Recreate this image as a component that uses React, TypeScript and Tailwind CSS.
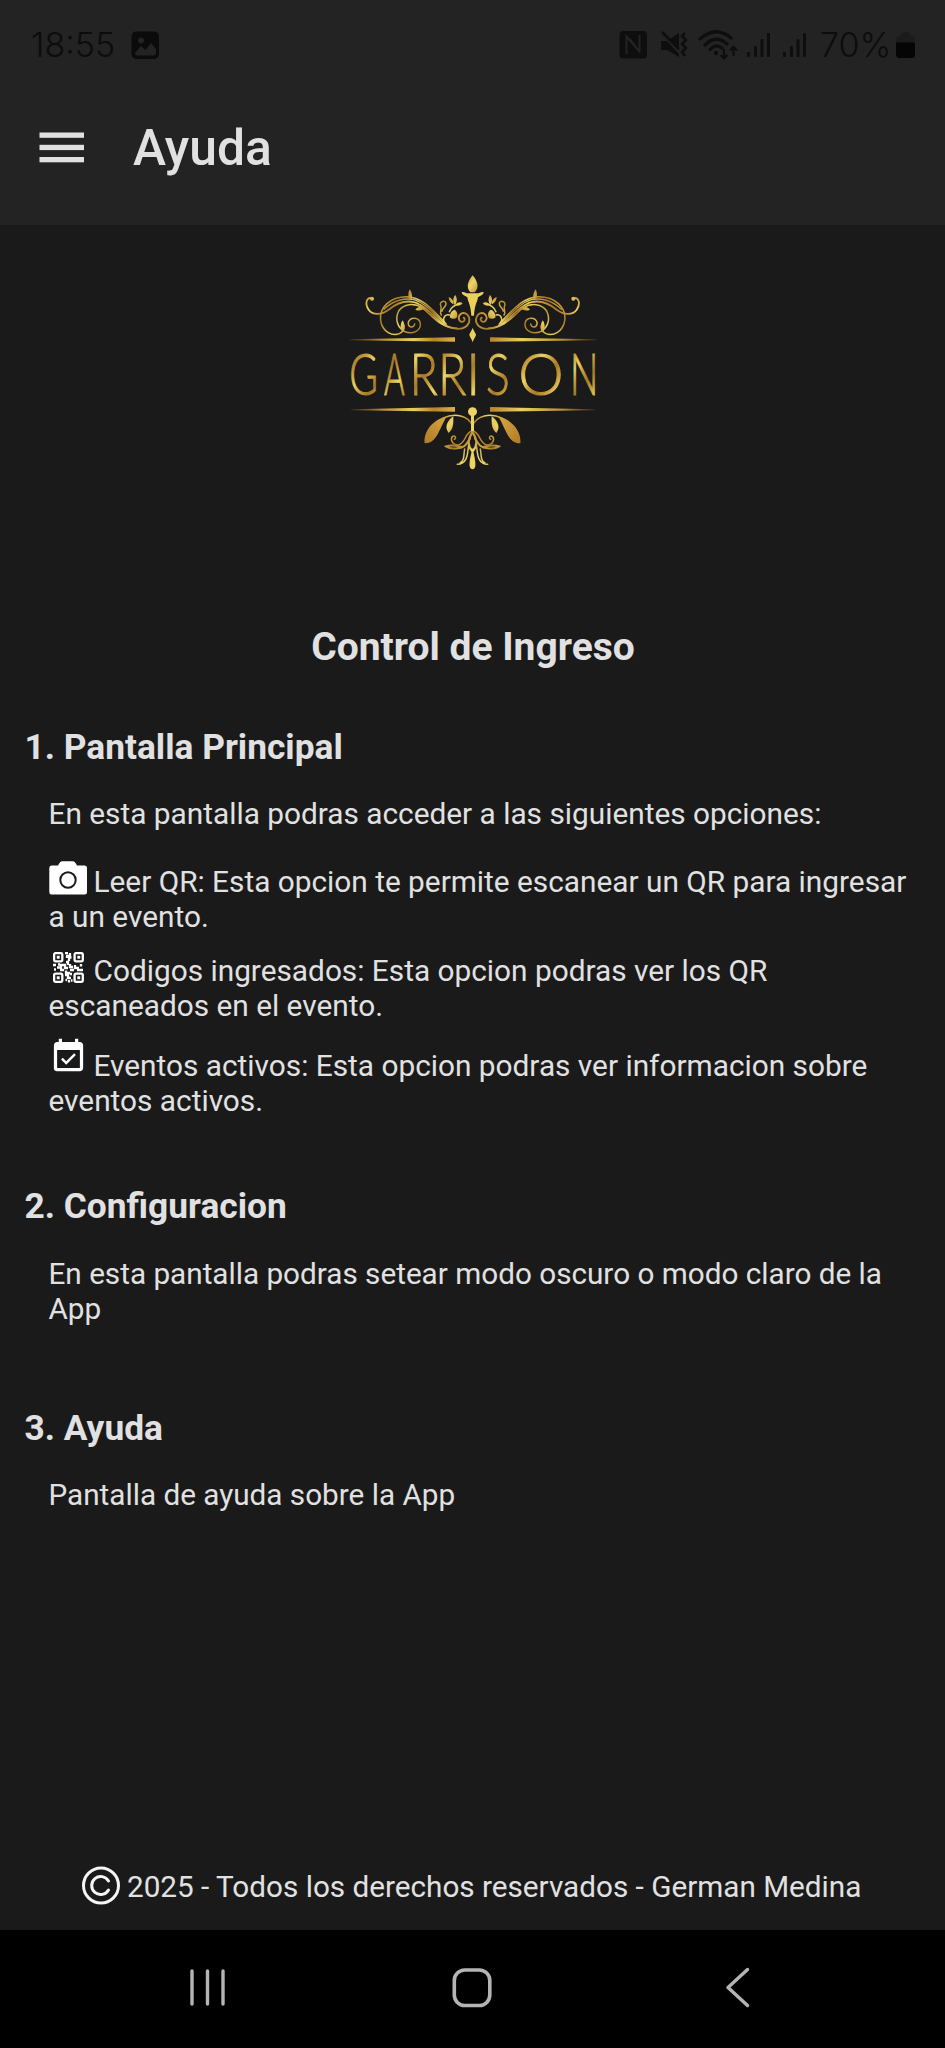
import type { ReactNode } from "react";
import { MdEventAvailable } from "react-icons/md";

const LETTERS: { ch: string; x: number; w: number }[] = [
  { ch: "G", x: 28, w: 86 },
  { ch: "A", x: 132, w: 62 },
  { ch: "R", x: 209, w: 84 },
  { ch: "R", x: 295, w: 84 },
  { ch: "I", x: 379, w: 42 },
  { ch: "S", x: 438, w: 71 },
  { ch: "O", x: 535, w: 136 },
  { ch: "N", x: 690, w: 85 },
];

function Scroll() {
  return (
    <g fill="none" stroke="url(#gold)" strokeWidth="4.500" strokeLinecap="round">
      <path d="M97 100C80 94 73 116 86 134C98 151 124 150 146 134C172 113 202 104 230 114C268 130 282 160 312 178C340 196 376 198 387 172C392 152 375 138 362 147C351 156 357 173 369 170C376 167 375 160 371 158" strokeWidth="5.500" />
      <path d="M318 176C282 140 250 96 200 95C150 95 116 128 122 168C128 202 158 214 178 206C193 199 196 186 187 172" />
      <path d="M352 190C300 190 276 150 246 128C222 113 190 116 176 138C164 162 172 188 194 200C220 210 243 196 241 175C237 155 210 155 205 172C203 188 222 191 224 177" />
      <path d="M132 133C160 105 195 98 222 104C262 116 286 154 318 178" strokeWidth="4" />
      <path d="M312 170C308 156 318 146 328 150M304 150C296 140 308 132 302 122C296 108 318 104 318 116C318 126 308 128 306 138" />
      <path d="M328 140C334 124 346 118 362 116" />
      <g fill="url(#gold)" stroke="none">
        <circle cx="96" cy="101" r="6" />
        <path d="M207 100C203 88 206 80 209 73C216 82 217 92 216 102Z" />
        <path d="M226 134C236 122 246 124 254 130C244 138 236 138 226 134Z" />
        <path d="M188 202C178 188 182 176 188 166C196 180 196 192 188 202Z" />
        <path d="M330 158C328 146 336 136 344 134C354 142 354 152 348 160C342 162 336 161 330 158Z" />
        <path d="M344 120C338 110 338 98 346 90C352 100 352 112 344 120Z" />
        <path d="M340 118C330 112 326 104 326 96C336 100 342 108 340 118Z" />
        <path d="M346 120C352 110 360 110 368 114C362 122 354 124 346 120Z" />
      </g>
    </g>
  );
}

function LowerHalf() {
  return (
    <g fill="none" stroke="url(#gold)" strokeWidth="4.500" strokeLinecap="round">
      <path d="M397 482C385 452 345 442 308 460" />
      <path d="M320 454C278 464 250 500 254 535C290 536 296 496 320 454Z" fill="url(#bronze)" stroke="none" />
      <path d="M340 454C320 468 313 488 326 504C342 490 340 472 340 454Z" fill="url(#gold)" stroke="none" />
      <path d="M396 498C374 502 378 536 354 540C336 540 330 522 338 514C346 510 350 520 343 523" />
      <path d="M390 520C380 536 376 548 352 550C338 552 326 550 318 544C336 538 352 542 366 546" strokeWidth="6" />
      <path d="M386 540C382 560 386 596 352 598M374 552C370 574 374 586 360 594" />
      <path d="M397 502C382 526 382 542 397 558" strokeWidth="7" />
    </g>
  );
}

function Logo() {
  return (
    <svg className="h-[215px] w-[270px]" viewBox="0 0 810 645" aria-label="Garrison">
      <defs>
        <linearGradient id="gold" gradientUnits="userSpaceOnUse" x1="0" y1="0" x2="40" y2="30" spreadMethod="reflect">
          <stop offset="0" stopColor="#a87a28" />
          <stop offset="0.5" stopColor="#c9a03c" />
          <stop offset="1" stopColor="#ecd566" />
        </linearGradient>
        <linearGradient id="bronze" x1="0" y1="1" x2="1" y2="0">
          <stop offset="0" stopColor="#b07a26" />
          <stop offset="1" stopColor="#d8a843" />
        </linearGradient>
        <linearGradient id="fadeLeft" x1="0" y1="0" x2="1" y2="0">
          <stop offset="0" stopColor="#8a641f" stopOpacity="0.3" />
          <stop offset="0.3" stopColor="#b98a31" />
          <stop offset="0.6" stopColor="#e8cf60" />
          <stop offset="0.8" stopColor="#b98328" />
          <stop offset="1" stopColor="#d9b249" />
        </linearGradient>
        <linearGradient id="fadeRight" x1="1" y1="0" x2="0" y2="0">
          <stop offset="0" stopColor="#8a641f" stopOpacity="0.3" />
          <stop offset="0.3" stopColor="#b98a31" />
          <stop offset="0.7" stopColor="#e8cf60" />
          <stop offset="1" stopColor="#b98328" />
        </linearGradient>
      </defs>
      <Scroll />
      <g transform="translate(796 0) scale(-1 1)">
        <Scroll />
      </g>
      <g fill="#ecd05c">
        <path d="M398 31C414 50 418 68 404 82H391C378 68 382 50 398 31Z" fill="url(#gold)" />
        <path d="M365 82C372 78 378 86 386 85H410C418 86 424 78 431 82C430 90 420 93 414 97C412 112 404 118 402 152H394C392 118 384 112 382 97C376 93 366 90 365 82Z" />
        <path d="M398 188C402 200 408 204 408 210C406 218 400 222 398 232C396 222 390 218 388 210C388 204 394 200 398 188Z" />
      </g>
      <path d="M30 223L345 217V230L30 226Z" fill="url(#fadeLeft)" />
      <path d="M768 223L450 217V230L768 226Z" fill="url(#fadeRight)" />
      <path d="M34 433L345 426V440L34 436Z" fill="url(#fadeLeft)" />
      <path d="M764 433L450 426V440L764 436Z" fill="url(#fadeRight)" />
      <text
        y="391"
        className="font-['Lato',sans-serif] text-[172px] font-light"
        fill="url(#gold)"
        stroke="url(#gold)"
        strokeWidth="3"
      >
        {LETTERS.map((l, i) => (
          <tspan key={i} x={l.x} textLength={l.w} lengthAdjust="spacingAndGlyphs">
            {l.ch}
          </tspan>
        ))}
      </text>
      <LowerHalf />
      <g transform="translate(795 0) scale(-1 1)">
        <LowerHalf />
      </g>
      <g fill="#ecd566">
        <circle cx="397.500" cy="440" r="13.500" />
        <path d="M393 450H402V498H393Z" />
        <path d="M397.500 548C402 570 408 590 406 604C404 616 391 616 389 604C387 590 393 570 397.500 548Z" />
      </g>
    </svg>
  );
}

function StatusBar() {
  return (
    <div className="flex h-[90px] items-start pt-[24px] pl-[31px] text-[#0c0c0c]">
      <span className="w-[100px] font-['Inter',sans-serif] text-[34px] leading-[41px] font-light">18:55</span>
      <svg className="mt-[7px] h-7 w-7" viewBox="0 0 28 28">
        <rect x="0.500" y="0.500" width="27.500" height="27.500" rx="5" fill="#0b0b0b" />
        <circle cx="10" cy="9.500" r="3" fill="#232323" />
        <path d="M4 22L10 15L14.500 19L20 12L25 18V22Q25 24.500 22.500 24.500H6Q4 24.500 4 22Z" fill="#232323" />
      </svg>
      <svg className="mt-[6px] ml-[460px] h-[30px] w-[201px]" viewBox="0 0 201 30" fill="#0e0e0e">
        <rect x="0.500" y="1" width="27.500" height="27.500" rx="4" />
        <path d="M7.500 24V6.500L20 21M11 9L21 22.500M20.500 5V22M7.500 24V7" fill="none" stroke="#232323" strokeWidth="2" />
        <path d="M42 11H48L60 3V27L48 20H42Z" />
        <path d="M41 1L62 24" stroke="#232323" strokeWidth="3" />
        <path d="M43 2L60 19" stroke="#0e0e0e" strokeWidth="2.500" />
        <path d="M66 3L63 6L67 10L63 14L67 18L63 22L66 26" fill="none" stroke="#0e0e0e" strokeWidth="2.500" />
        <g fill="none" stroke="#0e0e0e" strokeWidth="3.200" strokeLinecap="round">
          <path d="M81 9Q97 -5 112 8" />
          <path d="M86 15Q97 4 108 14" />
          <path d="M91 19.500Q97 13 103 18" />
        </g>
        <circle cx="97" cy="23" r="2.200" />
        <path d="M105 19V28M101.500 25L105 28.500L108.500 25M114.500 26V17M111 20.500L114.500 17L118 20.500" fill="none" stroke="#0e0e0e" strokeWidth="2.300" />
        {[128, 164].map((x) => (
          <g key={x}>
            <rect x={x} y="22" width="3" height="5" rx="1" />
            <rect x={x + 7} y="16" width="3" height="11" rx="1" />
            <rect x={x + 13.5} y="9" width="3" height="18" rx="1" />
            <rect x={x + 20} y="3" width="3" height="24" rx="1" />
          </g>
        ))}
      </svg>
      <span className="w-[76px] font-['Inter',sans-serif] text-[34px] leading-[41px] font-light">70%</span>
      <svg className="mt-[7px] h-7 w-[19px]" viewBox="0 0 19 28">
        <path d="M0.500 12V8Q0.500 5 3 5H4Q5 1 9 1H10Q14 1 15 5H16Q18.500 5 18.500 8V12Z" fill="#1b1b1b" />
        <path d="M0 11.500H19V23.500Q19 27 15.500 27H3.500Q0 27 0 23.500Z" fill="#050505" />
      </svg>
    </div>
  );
}

function CameraIcon() {
  return (
    <svg className="h-[34px] w-[38px]" viewBox="0 0 38 34">
      <path d="M2.500 4.500H9L10.500 2Q11.500 0.300 13 0.300H24Q25.500 0.300 26.500 2L28 4.500H35.500Q38 4.500 38 7V31Q38 33.500 35.500 33.500H2.500Q0.300 33.500 0.300 31V7Q0.300 4.500 2.500 4.500Z" fill="#fff" />
      <circle cx="19" cy="19" r="7.700" fill="none" stroke="#1a1a1a" strokeWidth="2" />
    </svg>
  );
}

function QrIcon() {
  const finders = [
    [0, 0],
    [20.5, 0],
    [0, 20.5],
    [20.5, 20.5],
  ];
  return (
    <svg className="h-[31px] w-[31px]" viewBox="0 0 31 31">
      {finders.map(([x, y]) => (
        <g key={`${x}-${y}`}>
          <rect x={x + 1.1} y={y + 1.1} width="8.200" height="8.200" rx="1.500" fill="none" stroke="#fff" strokeWidth="2.300" />
          <rect x={x + 3.8} y={y + 3.8} width="2.900" height="2.900" fill="#fff" />
        </g>
      ))}
      <path
        d="M12 1.200H15M17 1V4H13M14 4V6M18.500 5.500H16V9M13 10H15V13M0 13H3M4 15.500H8V13H12V16H15M1 17.500H3M7 18H11M17 12V15H20M22 13V16H26M28 12V14.500M24 18H30M17 18H21M13 18.500V21H17M12 23H15V26H18M17 22H19M12.500 28H14M16 28V30.500M18 28.500H19.500M5 12.500H7"
        fill="none"
        stroke="#fff"
        strokeWidth="2.300"
      />
    </svg>
  );
}

function Heading({ children }: { children: ReactNode }) {
  return <h2 className="pl-[24.500px] text-[35.3px] leading-[42px] font-bold">{children}</h2>;
}

function Item({ icon, first, rest, className }: { icon: ReactNode; first: string; rest: string; className: string }) {
  return (
    <li className={className}>
      <div className="flex h-[35px] whitespace-nowrap">
        <span className="flex w-[45px] shrink-0">{icon}</span>
        <span>{first}</span>
      </div>
      <div>{rest}</div>
    </li>
  );
}

export default function App() {
  return (
    <div className="flex h-[2048px] w-[945px] flex-col overflow-hidden bg-[#1a1a1a] font-['Roboto',sans-serif] text-[#e1e1e1]">
      <header className="h-[225px] shrink-0 bg-[#232323]">
        <StatusBar />
        <div className="flex items-start pt-[29px] pl-[39px]">
          <svg className="mt-[13px] h-[31px] w-[45px]" viewBox="0 0 45 31" fill="#e1e1e1">
            <rect x="0.500" y="0.500" width="44.500" height="5.300" />
            <rect x="0.500" y="12.800" width="44.500" height="5.300" />
            <rect x="0.500" y="25" width="44.500" height="5.300" />
          </svg>
          <h1 className="ml-[49px] text-[49.8px] leading-[58px] font-medium">Ayuda</h1>
        </div>
      </header>

      <main className="flex-1">
        <div className="pt-[40px] pl-[340px]">
          <Logo />
        </div>
        <h2 className="mt-[144px] pl-px text-center text-[39px] leading-[46px] font-bold">Control de Ingreso</h2>

        <section className="mt-[56px]">
          <Heading>1. Pantalla Principal</Heading>
          <div className="pl-[48.500px] text-[29.8px] leading-[35px]">
            <p className="mt-[28px]">En esta pantalla podras acceder a las siguientes opciones:</p>
            <ul className="mt-[33px]">
              <Item className="" icon={<span className="-mt-[3px]"><CameraIcon /></span>} first="Leer QR: Esta opcion te permite escanear un QR para ingresar" rest="a un evento." />
              <Item className="mt-[19px]" icon={<span className="-mt-px ml-[4px]"><QrIcon /></span>} first="Codigos ingresados: Esta opcion podras ver los QR" rest="escaneados en el evento." />
              <Item className="mt-[25px]" icon={<MdEventAvailable className="-mt-[11px] h-[39px] w-[39px] shrink-0 text-white" />} first="Eventos activos: Esta opcion podras ver informacion sobre" rest="eventos activos." />
            </ul>
          </div>
        </section>

        <section className="mt-[67px]">
          <Heading>2. Configuracion</Heading>
          <p className="mt-[29px] pl-[48.500px] text-[29.7px] leading-[35px]">
            En esta pantalla podras setear modo oscuro o modo claro de la
            <br />
            App
          </p>
        </section>

        <section className="mt-[81px]">
          <Heading>3. Ayuda</Heading>
          <p className="mt-[28px] pl-[48.500px] text-[29.7px] leading-[35px]">Pantalla de ayuda sobre la App</p>
        </section>
      </main>

      <footer className="flex h-[64px] shrink-0 items-start pl-[82px]">
        <svg className="h-[39px] w-[38px]" viewBox="0 0 38 38" fill="none" stroke="#f5f5f5" strokeWidth="3">
          <circle cx="19" cy="19" r="17.500" />
          <path d="M26.500 14.500A9 9 0 1 0 26.500 23.500" strokeLinecap="round" />
        </svg>
        <p className="mt-[3px] ml-[7px] text-[29.7px] leading-[35px]">2025 - Todos los derechos reservados - German Medina</p>
      </footer>

      <nav className="flex h-[118px] shrink-0 items-start bg-black pt-[37px] pl-[189px]">
        <svg className="h-[41px] w-[37px]" viewBox="0 0 37 41" stroke="#b4b4b4" strokeWidth="3.400" strokeLinecap="round">
          <path d="M3 4V37M18.500 4V37M34 4V37" />
        </svg>
        <svg className="ml-[225px] h-[41px] w-[41px]" viewBox="0 0 41 41" fill="none" stroke="#b4b4b4" strokeWidth="3.600">
          <rect x="3.300" y="3" width="35.500" height="35.500" rx="10.500" />
        </svg>
        <svg className="ml-[232px] h-[41px] w-[26px]" viewBox="0 0 26 41" fill="none" stroke="#b4b4b4" strokeWidth="3.400" strokeLinecap="round" strokeLinejoin="round">
          <path d="M23.500 2.500L4 20.500L23.500 38.500" />
        </svg>
      </nav>
    </div>
  );
}
